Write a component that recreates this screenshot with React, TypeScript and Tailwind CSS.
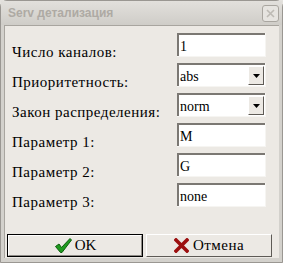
import React from 'react';

const fields = [
  { label: 'Число каналов:', value: '1', select: false },
  { label: 'Приоритетность:', value: 'abs', select: true },
  { label: 'Закон распределения:', value: 'norm', select: true },
  { label: 'Параметр 1:', value: 'M', select: false },
  { label: 'Параметр 2:', value: 'G', select: false },
  { label: 'Параметр 3:', value: 'none', select: false },
];

function CheckIcon() {
  return (
    <svg width="19" height="17" viewBox="0 0 19 17">
      <path d="M1.5 9.5 L5 7 L7.5 10.5 L16 1.5 L17.5 3 L8 15.5 L6.5 15.5 Z" fill="#1f9a1f" stroke="#0b5e0b" strokeWidth="1" strokeLinejoin="round" />
    </svg>
  );
}

function CrossIcon() {
  return (
    <svg width="15" height="15" viewBox="0 0 15 15">
      <path d="M2 2 L13 13 M13 2 L2 13" stroke="#9c0f0f" strokeWidth="3.6" strokeLinecap="square" />
    </svg>
  );
}

export default function App() {
  return (
    <div className="w-[283px] h-[263px] overflow-hidden bg-[#e4e2de]">
      <div className="flex h-full w-full flex-col rounded-t-[7px] border border-[#9a9792] bg-[#d3d1cc]">
        {/* title bar */}
        <div className="flex h-[24px] shrink-0 items-center justify-between bg-gradient-to-b from-[#e2e0dc] to-[#cfcdc8] pl-[7px] pr-[3px]">
          <span className="font-['Liberation_Sans',sans-serif] text-[12px] font-bold text-[#aeaaa4]">Serv детализация</span>
          <div className="flex h-[17px] w-[17px] items-center justify-center rounded-[3px] border border-[#a9a6a0] bg-[#e6e4e0]">
            <svg width="9" height="9" viewBox="0 0 9 9">
              <path d="M1 1 L8 8 M8 1 L1 8" stroke="#bdbab4" strokeWidth="1.6" />
            </svg>
          </div>
        </div>

        {/* body */}
        <div className="mx-[3px] mb-[4px] flex flex-1 flex-col border-l border-t border-[#a8a59f] bg-[#ece9e4] font-['Liberation_Serif',serif] text-black">
          <div className="flex flex-col gap-[6px] pl-[7px] pt-[7px]">
            {fields.map((f) => (
              <div key={f.label} className="flex h-[24px] items-start">
                <span className="w-[165px] pt-[11px] text-[15px] leading-[17px] tracking-[0.5px]">{f.label}</span>
                <div className="flex h-[24px] w-[89px] border-b border-r border-[#f6f5f2]">
                  <div className="flex flex-1 items-start border-l-2 border-t-2 border-l-[#7b7873] border-t-[#7b7873] bg-white">
                    <span className="flex-1 pl-[1px] pt-[4px] text-[14px] leading-[16px]">{f.value}</span>
                    {f.select && (
                      <div className="m-[1px] flex h-[19px] w-[16px] items-center justify-center border-b border-r border-b-[#5e5b56] border-r-[#5e5b56] border-l border-t border-l-white border-t-white bg-[#ece9e4]">
                        <svg width="7" height="4" viewBox="0 0 7 4">
                          <path d="M0 0 H7 L3.5 4 Z" fill="#000" />
                        </svg>
                      </div>
                    )}
                  </div>
                </div>
              </div>
            ))}
          </div>

          {/* buttons */}
          <div className="mt-auto mb-[1px] flex gap-[3px] pl-[2px] pr-[3px]">
            <button className="flex h-[23px] w-[136px] items-center justify-center border border-black bg-[#ece9e4]">
              <div className="flex h-full w-full items-center justify-center gap-[2px] border-b border-r border-b-[#8d8a85] border-r-[#8d8a85] border-l border-t border-l-white border-t-white">
                <CheckIcon />
                <span className="text-[15px] leading-[17px]">OK</span>
              </div>
            </button>
            <button className="flex h-[23px] w-[126px] items-center justify-center gap-[4px] border-b border-r border-b-[#5e5b56] border-r-[#5e5b56] border-l border-t border-l-white border-t-white bg-[#ece9e4]">
              <CrossIcon />
              <span className="text-[15px] leading-[17px] tracking-[0.5px]">Отмена</span>
            </button>
          </div>
        </div>
      </div>
    </div>
  );
}
